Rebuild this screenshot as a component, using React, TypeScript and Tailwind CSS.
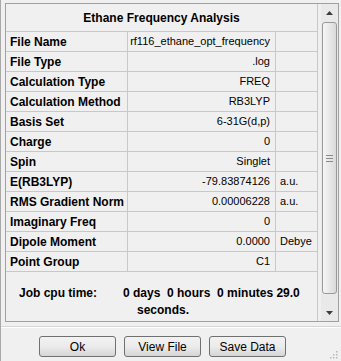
import { Fragment } from "react";

const rows: [string, string, string][] = [
  ["File Name", "rf116_ethane_opt_frequency", ""],
  ["File Type", ".log", ""],
  ["Calculation Type", "FREQ", ""],
  ["Calculation Method", "RB3LYP", ""],
  ["Basis Set", "6-31G(d,p)", ""],
  ["Charge", "0", ""],
  ["Spin", "Singlet", ""],
  ["E(RB3LYP)", "-79.83874126", "a.u."],
  ["RMS Gradient Norm", "0.00006228", "a.u."],
  ["Imaginary Freq", "0", ""],
  ["Dipole Moment", "0.0000", "Debye"],
  ["Point Group", "C1", ""],
];

function Arrow({ down }: { down?: boolean }) {
  return (
    <svg width="7" height="4" viewBox="0 0 7 4">
      <path d={down ? "M0 0h7L3.5 4z" : "M0 4h7L3.5 0z"} fill="#3c3c3c" />
    </svg>
  );
}

function ScrollBar() {
  return (
    <div className="w-[17px] h-full flex flex-col bg-[#e9e9e9]">
      <div className="h-[17px] flex items-center justify-center">
        <Arrow />
      </div>
      <div className="flex-1 pt-[1px] pb-[10px] px-[1px]">
        <div className="h-full rounded-[3px] border border-[#9a9a9a] bg-gradient-to-r from-[#f6f6f6] to-[#dadada] flex items-center justify-center">
          <svg width="7" height="7" viewBox="0 0 7 7">
            <path d="M0 0.5h7M0 3.5h7M0 6.5h7" stroke="#8a8a8a" strokeWidth="1" />
          </svg>
        </div>
      </div>
      <div className="h-[17px] flex items-center justify-center">
        <Arrow down />
      </div>
    </div>
  );
}

function Btn({ label }: { label: string }) {
  return (
    <button className="w-[77px] h-[21px] rounded-[3px] border border-[#707070] bg-gradient-to-b from-[#f2f2f2] via-[#ebebeb] to-[#d6d6d6] text-[12px] text-black leading-none">
      {label}
    </button>
  );
}

export default function App() {
  return (
    <div
      className="w-[341px] h-[361px] bg-[#f0f0f0] border-l border-[#a9a9a9] flex flex-col pt-[3px] text-black overflow-hidden"
      style={{ fontFamily: '"Liberation Sans", Arial, sans-serif' }}
    >
      <div className="ml-[4px] w-[334px] h-[319px] border border-[#a0a0a0] flex">
        <div className="w-[312px] flex flex-col border-r border-[#c8c8c8]">
          <div className="h-[28px] border-b border-[#c8c8c8] flex items-center justify-center font-bold text-[12px]">
            Ethane Frequency Analysis
          </div>
          <div className="grid grid-cols-[122px_148px_41px]">
            {rows.map(([label, value, unit]) => (
              <Fragment key={label}>
                <div className="h-[20px] border-b border-r border-[#c8c8c8] flex items-center pl-[4px] font-bold text-[12px] whitespace-nowrap">
                  {label}
                </div>
                <div className="h-[20px] border-b border-r border-[#c8c8c8] flex items-center justify-end pr-[5px] text-[11px] whitespace-nowrap">
                  {value}
                </div>
                <div className="h-[20px] border-b border-[#c8c8c8] flex items-center pl-[4px] text-[11px] whitespace-nowrap">
                  {unit}
                </div>
              </Fragment>
            ))}
          </div>
          <div className="flex pt-[13px] font-bold text-[12px] leading-[17px]">
            <div className="pl-[13px] w-[117px]">Job cpu time:</div>
            <div className="flex flex-col">
              <span className="whitespace-pre">0 days  0 hours  0 minutes 29.0</span>
              <span className="pl-[14px]">seconds.</span>
            </div>
          </div>
        </div>
        <div className="ml-auto flex">
          <ScrollBar />
        </div>
      </div>
      <div className="mt-[4px] h-px bg-[#d5d5d5]" />
      <div className="h-px bg-white" />
      <div className="mt-[8px] flex pl-[38px] gap-[8px]">
        <Btn label="Ok" />
        <Btn label="View File" />
        <Btn label="Save Data" />
      </div>
      <div className="flex justify-end pr-[3px] -mt-[8px]">
        <svg width="10" height="10" viewBox="0 0 10 10">
          {[
            [8, 2],
            [8, 5],
            [5, 5],
            [8, 8],
            [5, 8],
            [2, 8],
          ].map(([x, y]) => (
            <rect key={`${x}-${y}`} x={x} y={y} width="1.5" height="1.5" fill="#b8b8b8" />
          ))}
        </svg>
      </div>
    </div>
  );
}
